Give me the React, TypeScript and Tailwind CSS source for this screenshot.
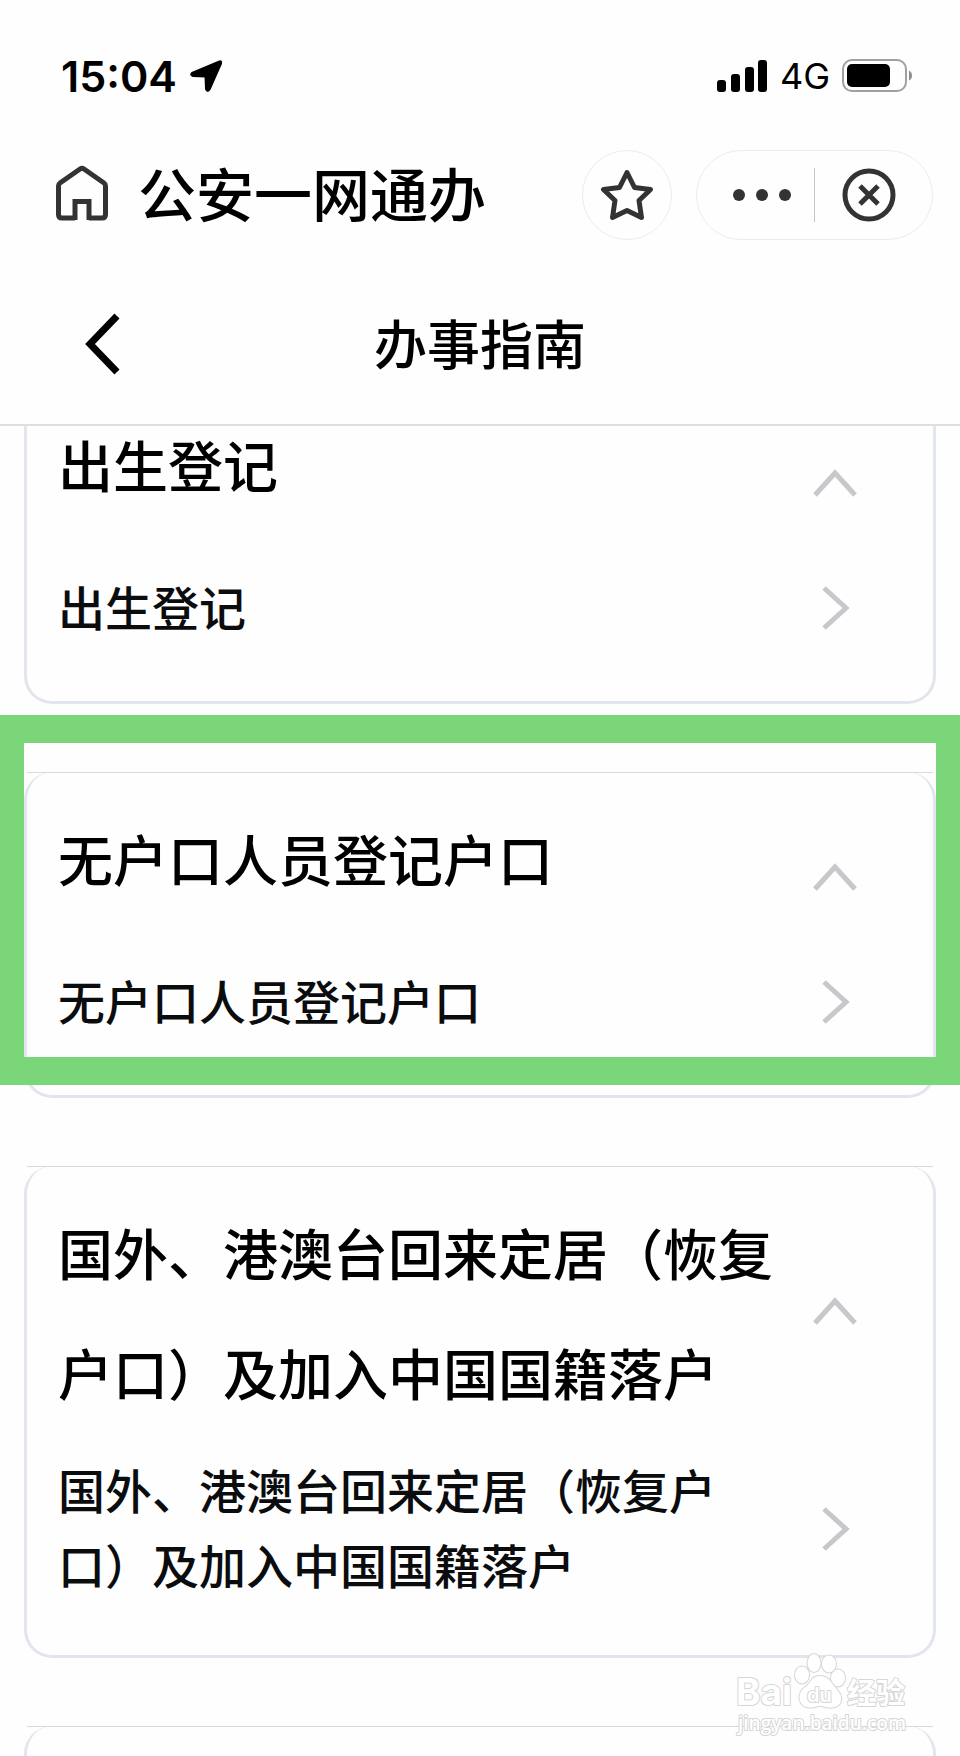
import { ReactNode } from 'react';

type GuideType = {
  title: string,
  items: string[],
  listGap?: string,
  highlighted?: boolean,
}

const guides: GuideType[] = [
  { title: '出生登记', items: ['出生登记'] },
  { title: '无户口人员登记户口', items: ['无户口人员登记户口'], highlighted: true },
  {
    title: '国外、港澳台回来定居（恢复户口）及加入中国国籍落户',
    items: ['国外、港澳台回来定居（恢复户口）及加入中国国籍落户'],
    listGap: 'mt-5',
  },
];

const StatusBar = () => (
  <div className="flex items-center justify-between pt-[51px] pl-[61px] pr-[47px] font-['Inter',sans-serif]">
    <div className="flex items-center gap-3">
      <span className="text-[43px] leading-[50px] font-semibold">15:04</span>
      <svg className="w-[34px] h-[34px]" viewBox="0 0 34 34" aria-hidden="true">
        <path
          d="M30.500 2.500 L3 14 Q1 16 4 17 L16.500 17.500 L17 30 Q18.500 33.500 20.500 30.500 L32 4.500 Q32.500 1.500 30.500 2.500Z"
          fill="#000"
          stroke="#000"
          strokeWidth="2"
          strokeLinejoin="round"
        />
      </svg>
    </div>
    <div className="flex items-center gap-3">
      <svg className="w-[51px] h-8" viewBox="0 0 51 32" aria-hidden="true">
        <rect x="0" y="20" width="9" height="12" rx="3" />
        <rect x="14" y="14" width="9" height="18" rx="3" />
        <rect x="28" y="7" width="9" height="25" rx="3" />
        <rect x="41" y="0" width="9" height="32" rx="3" />
      </svg>
      <span className="text-[36px] leading-[50px]">4G</span>
      <svg className="w-[71px] h-[34px]" viewBox="0 0 71 34" aria-hidden="true">
        <rect x="1" y="1" width="63" height="31" rx="9" fill="none" stroke="#a0a0a0" strokeWidth="2" />
        <rect x="5" y="5" width="43" height="23" rx="5" />
        <path d="M67 11.500 Q70 13 70 16.500 Q70 20 67 21.500Z" fill="#8f8f8f" />
      </svg>
    </div>
  </div>
);

const AppBar = () => (
  <div className="flex items-center mt-[49px] pl-[55px] pr-[27px]">
    <button type="button" aria-label="首页" className="pb-1">
      <svg className="w-[54px] h-14" viewBox="0 0 54 56" fill="none" stroke="#333" strokeWidth="5" aria-hidden="true">
        <path
          d="M20 53 H7 Q3.500 53 3.500 49.500 V21 Q3.500 19 5 18 L25 4 Q27 2.700 29 4 L49 18 Q50.500 19 50.500 21 V49.500 Q50.500 53 47 53 H34 M20 55 V36.500 H34 V55"
        />
      </svg>
    </button>
    <span className="ml-[29px] pb-1.5 flex-1 text-[58px] leading-[70px] font-medium">公安一网通办</span>
    <button
      type="button"
      aria-label="收藏"
      className="flex items-center justify-center w-[90px] h-[90px] rounded-full border border-[#ececec]"
    >
      <svg className="w-[54px] h-[54px]" viewBox="0 0 54 54" fill="none" stroke="#333" strokeWidth="5" strokeLinejoin="round" aria-hidden="true">
        <path d="M27 4.500 L34.500 19.500 L50.500 21.500 L39 32.500 L41.500 49.500 L27 42.500 L12.500 49.500 L15 32.500 L3.500 21.500 L19.500 19.500Z" />
      </svg>
    </button>
    <div className="flex items-center ml-6 h-[90px] w-[237px] rounded-full border border-[#ececec]">
      <button type="button" aria-label="更多" className="flex items-center gap-[11px] pl-9 pr-[23px]">
        <i className="w-3 h-3 rounded-full bg-[#333]" />
        <i className="w-3 h-3 rounded-full bg-[#333]" />
        <i className="w-3 h-3 rounded-full bg-[#333]" />
      </button>
      <i className="w-px h-[54px] bg-[#c4c4c4]" />
      <button type="button" aria-label="关闭" className="ml-[27px]">
        <svg className="w-[54px] h-[54px]" viewBox="0 0 54 54" fill="none" stroke="#333" strokeWidth="5" aria-hidden="true">
          <circle cx="27" cy="27" r="24" />
          <path d="M18 18 L36 36 M36 18 L18 36" />
        </svg>
      </button>
    </div>
  </div>
);

const NavBar = () => (
  <div className="grid grid-cols-[1fr_auto_1fr] items-center pt-[41px] pb-[17px]">
    <button type="button" aria-label="返回" className="justify-self-start ml-[84px] py-8">
      <svg className="w-9 h-[62px]" viewBox="0 0 36 62" fill="none" stroke="#000" strokeWidth="7" aria-hidden="true">
        <path d="M33 3 L6 31 L33 59" />
      </svg>
    </button>
    <h1 className="pb-1 text-[53px] leading-[64px] font-medium">办事指南</h1>
  </div>
);

const Chevron = ({ children }: { children: ReactNode }) => (
  <svg className="shrink-0 w-11 h-11" viewBox="0 0 44 44" fill="none" stroke="#c7c7cc" strokeWidth="5" aria-hidden="true">
    {children}
  </svg>
);

const cardStyle = 'relative mx-6 border-x-[3px] border-b-[3px] border-[#e1e5ed] rounded-[28px]';

const TopLine = () => <i className="absolute top-0 inset-x-0 h-px bg-[#d9dadd]" />;

const GuideCard = ({ title, items, listGap, highlighted }: GuideType) => (
  <section className={`${cardStyle} pt-[25px] pb-12 pl-[31px] pr-[76px]`}>
    <TopLine />
    <button type="button" aria-expanded="true" className="flex items-center w-full min-h-40 text-left">
      <span className="flex-1 self-start pr-8 text-[55px] leading-[120px] font-medium">{title}</span>
      <Chevron><path d="M2 34 L22 12 L42 34" /></Chevron>
    </button>
    <ul className={listGap}>
      {items.map((item) => (
        <li key={item}>
          <a href="#guide" className="flex items-center min-h-[90px] text-[#0b0c0e]">
            <span className="flex-1 pr-20 pb-1.5 text-[47px] leading-[75px] font-medium">{item}</span>
            <Chevron><path d="M11 2 L33 22 L11 42" /></Chevron>
          </a>
        </li>
      ))}
    </ul>
    {highlighted && (
      <div className="absolute z-10 pointer-events-none -top-[57px] bottom-2.5 -inset-x-[27px] border-x-[24px] border-y-[28px] border-[#7bd679]" />
    )}
  </section>
);

const Watermark = () => (
  <svg className="absolute right-[48px] bottom-4 w-[180px] h-[90px]" viewBox="0 0 180 90" aria-hidden="true">
    <g fill="#fff" stroke="#d6d6d6" strokeWidth="2" strokeLinejoin="round" paintOrder="stroke">
      <text x="4" y="55" fontFamily="Inter, sans-serif" fontWeight="700" fontSize="37">Bai</text>
      <ellipse cx="70" cy="25" rx="7" ry="8.500" />
      <ellipse cx="82" cy="13" rx="6.500" ry="9" />
      <ellipse cx="97" cy="14" rx="7" ry="8.500" />
      <ellipse cx="106" cy="28" rx="7" ry="8.500" />
      <path d="M88 26 Q95 26 99 32 Q103 37 106 41 Q112 48 107 55 Q102 59 94 57 Q88 55 82 57 Q73 59 69 53 Q65 46 71 39 Q76 35 79 31 Q82 26 88 26Z" />
      <text x="75" y="52" fontFamily="Inter, sans-serif" fontWeight="600" fontSize="20">du</text>
      <text x="115" y="54" fontFamily="'Noto Sans CJK SC', sans-serif" fontWeight="700" fontSize="29">经验</text>
      <text x="6" y="80" fontFamily="'Open Sans', sans-serif" fontWeight="600" fontSize="19">jingyan.baidu.com</text>
    </g>
  </svg>
);

const App = () => (
  <div className="relative flex flex-col h-screen overflow-hidden bg-[#fefefe] text-black font-['Noto_Sans_CJK_SC',sans-serif]">
    <header className="relative z-20 shrink-0 bg-[#fefefe] border-b-2 border-[#dedee0]">
      <StatusBar />
      <AppBar />
      <NavBar />
    </header>
    <main className="flex-1 min-h-0 overflow-hidden">
      <div className="flex flex-col gap-[68px] -mt-12">
        {guides.map((guide) => <GuideCard key={guide.title} {...guide} />)}
        <section className={`${cardStyle} h-40`}>
          <TopLine />
        </section>
      </div>
    </main>
    <Watermark />
  </div>
);

export default App;
